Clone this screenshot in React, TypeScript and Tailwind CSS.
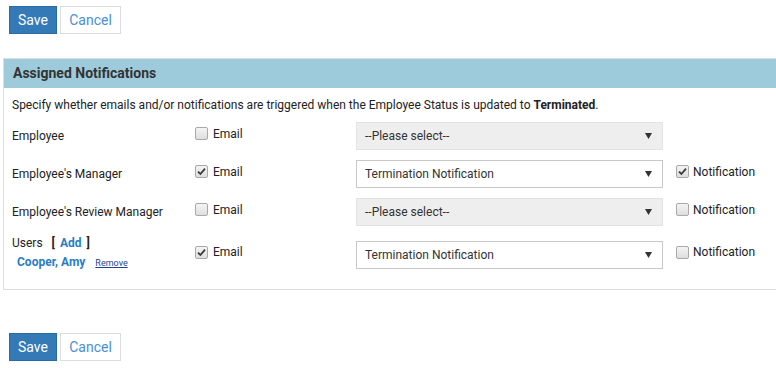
import React from 'react'

function Check({ checked }: { checked?: boolean }) {
  return (
    <span className="inline-flex h-[13px] w-[13px] shrink-0 items-center justify-center rounded-[2px] border border-[#a9a9a9] bg-gradient-to-b from-[#f4f4f4] to-[#dedede]">
      {checked && (
        <svg width="9" height="9" viewBox="0 0 9 9">
          <path d="M1 4.6 L3.4 7 L8 1.6" fill="none" stroke="#3a3a3a" strokeWidth="1.8" />
        </svg>
      )}
    </span>
  )
}

function Select({ value, disabled }: { value: string; disabled?: boolean }) {
  return (
    <div
      className={
        'flex h-[28px] w-[307px] items-center justify-between border pl-[8px] pr-[10px] text-[12px] text-[#333] ' +
        (disabled ? 'border-[#e2e2e2] bg-[#eeeeee]' : 'border-[#c8c8c8] bg-white')
      }
    >
      <span>{value}</span>
      <svg width="7" height="6" viewBox="0 0 7 6">
        <path d="M0 0 H7 L3.5 6 Z" fill="#333" />
      </svg>
    </div>
  )
}

function Buttons() {
  return (
    <div className="flex gap-[3px]">
      <button className="h-[28px] w-[48px] border border-[#2a6aa3] bg-[#337ab7] text-[14px] text-white">Save</button>
      <button className="h-[28px] w-[61px] border border-[#dcdcdc] bg-white text-[14px] text-[#4a8fd4]">Cancel</button>
    </div>
  )
}

const rows = [
  { label: 'Employee', email: false, select: '--Please select--', disabled: true, notif: null as boolean | null },
  { label: "Employee's Manager", email: true, select: 'Termination Notification', disabled: false, notif: true },
  { label: "Employee's Review Manager", email: false, select: '--Please select--', disabled: true, notif: false },
]

export default function App() {
  return (
    <div className="min-h-screen bg-white font-['Roboto',sans-serif] text-[12px] text-[#222]">
      <div className="pl-[9px] pt-[6px]">
        <Buttons />
      </div>

      <div className="ml-[3px] mt-[24px] border border-r-0 border-[#dddddd] pb-[16px]">
        <div className="flex h-[29px] items-center bg-[#9ecbdc] pl-[9px] text-[14px] font-bold text-[#333]">
          Assigned Notifications
        </div>
        <div className="pl-[8px]">
          <p className="mt-[8px] leading-[18px]">
            Specify whether emails and/or notifications are triggered when the Employee Status is updated to{' '}
            <b>Terminated</b>.
          </p>

          <div className="mt-[8px] flex flex-col gap-[10px]">
            {rows.map((r) => (
              <div key={r.label} className="flex items-center">
                <div className="w-[183px]">{r.label}</div>
                <div className="mb-[5px] flex w-[161px] items-center gap-[5px]">
                  <Check checked={r.email} />
                  <span>Email</span>
                </div>
                <Select value={r.select} disabled={r.disabled} />
                {r.notif !== null && (
                  <div className="mb-[5px] ml-[13px] flex items-center gap-[4px]">
                    <Check checked={r.notif} />
                    <span>Notification</span>
                  </div>
                )}
              </div>
            ))}

            <div className="flex items-center">
              <div className="w-[183px] leading-[19px]">
                <div className="-mt-[2px]">
                  Users <span className="ml-[6px] font-bold">[</span>
                  <span className="ml-[5px] font-bold text-[#2a7dc4]">Add</span>
                  <span className="ml-[5px] font-bold">]</span>
                </div>
                <div className="pl-[5px]">
                  <span className="font-bold text-[#2a7dc4]">Cooper, Amy</span>
                  <span className="ml-[10px] text-[9px] text-[#1f3f8f] underline">Remove</span>
                </div>
              </div>
              <div className="mb-[5px] flex w-[161px] items-center gap-[5px]">
                <Check checked />
                <span>Email</span>
              </div>
              <Select value="Termination Notification" />
              <div className="mb-[5px] ml-[13px] flex items-center gap-[4px]">
                <Check />
                <span>Notification</span>
              </div>
            </div>
          </div>
        </div>
      </div>

      <div className="pl-[9px] pt-[43px]">
        <Buttons />
      </div>
    </div>
  )
}
